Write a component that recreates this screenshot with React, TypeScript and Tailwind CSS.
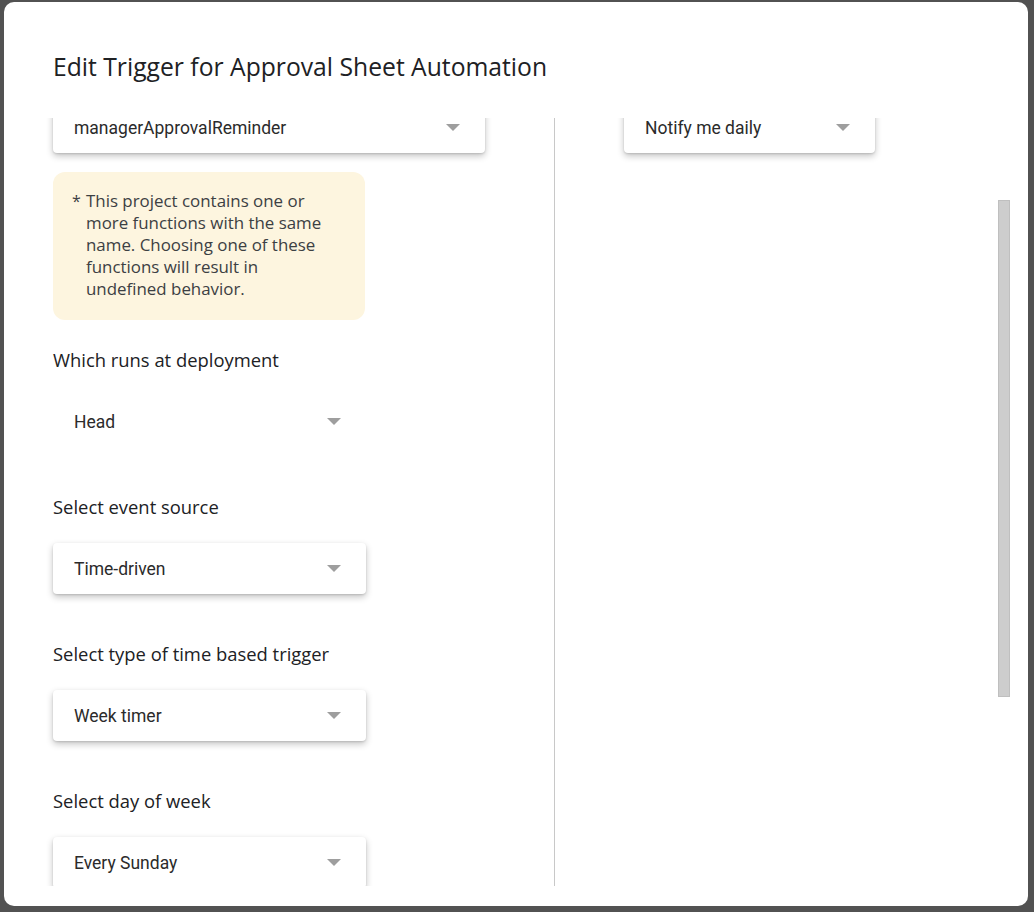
import React from "react";

const sans = "font-['Open_Sans',_'Noto_Sans',sans-serif]";
const roboto = "font-['Roboto',_'Liberation_Sans',sans-serif]";

const Arrow = () => (
  <svg width="14" height="7" viewBox="0 0 14 7" className="shrink-0">
    <path d="M0 0h14L7 7z" fill="#9e9e9e" />
  </svg>
);

interface SelectProps {
  value: string;
  width: string;
  flat?: boolean;
}

const Select: React.FC<SelectProps> = ({ value, width, flat }) => (
  <div
    className={`${width} h-[51px] flex items-center justify-between pl-[21px] pr-[25px] rounded bg-white ${
      flat ? "" : "shadow-[0_3px_7px_rgba(0,0,0,0.24),0_1px_2px_rgba(0,0,0,0.12)]"
    }`}
  >
    <span className={`${roboto} text-[17.5px] pt-px text-[#2b2b2b]`}>{value}</span>
    <Arrow />
  </div>
);

const Label: React.FC<{ text: string; className?: string }> = ({ text, className }) => (
  <div className={`${sans} h-[24px] leading-[24px] text-[18.4px] text-[#202124] ${className ?? ""}`}>
    {text}
  </div>
);

export default function App() {
  return (
    <div className="w-[1034px] h-[912px] bg-[#525252] pt-[2px] pl-[4px] overflow-hidden">
      <div className="w-[1024px] h-[904px] bg-white rounded-[10px] flex flex-col">
        <div className="h-[116px] pl-[49px] pt-[49px]">
          <h1 className={`${sans} text-[24.7px] leading-[32px] text-[#202124]`}>
            Edit Trigger for Approval Sheet Automation
          </h1>
        </div>
        <div className="h-[768px] flex overflow-hidden">
          <div className="w-[551px] pl-[49px] border-r border-[#c8c8c8] shrink-0">
            <div className="-mt-[16px] flex flex-col">
              <Select value="managerApprovalReminder" width="w-[432px]" />
              <div className="mt-[19px] w-[312px] h-[148px] rounded-xl bg-[#fdf5df] pt-[18px] pl-[19px] pr-[28px] flex">
                <span className={`${sans} text-[16px] leading-[22px] text-[#3c4043] w-[14px] shrink-0`}>*</span>
                <p className={`${sans} text-[16.9px] leading-[22px] text-[#3c4043]`}>
                  This project contains one or more functions with the same name. Choosing one of these
                  functions will result in undefined behavior.
                </p>
              </div>
              <Label text="Which runs at deployment" className="mt-[28px]" />
              <div className="mt-[24px]">
                <Select value="Head" width="w-[313px]" flat />
              </div>
              <Label text="Select event source" className="mt-[48px]" />
              <div className="mt-[24px]">
                <Select value="Time-driven" width="w-[313px]" />
              </div>
              <Label text="Select type of time based trigger" className="mt-[48px]" />
              <div className="mt-[24px]">
                <Select value="Week timer" width="w-[313px]" />
              </div>
              <Label text="Select day of week" className="mt-[48px]" />
              <div className="mt-[24px]">
                <Select value="Every Sunday" width="w-[313px]" />
              </div>
            </div>
          </div>
          <div className="flex-1 pl-[69px]">
            <div className="-mt-[16px]">
              <Select value="Notify me daily" width="w-[251px]" />
            </div>
          </div>
          <div className="w-[30px] shrink-0 pt-[82px]">
            <div className="w-[12px] h-[497px] bg-[#cdcdcd] border border-[#bfbfbf]" />
          </div>
        </div>
      </div>
    </div>
  );
}
